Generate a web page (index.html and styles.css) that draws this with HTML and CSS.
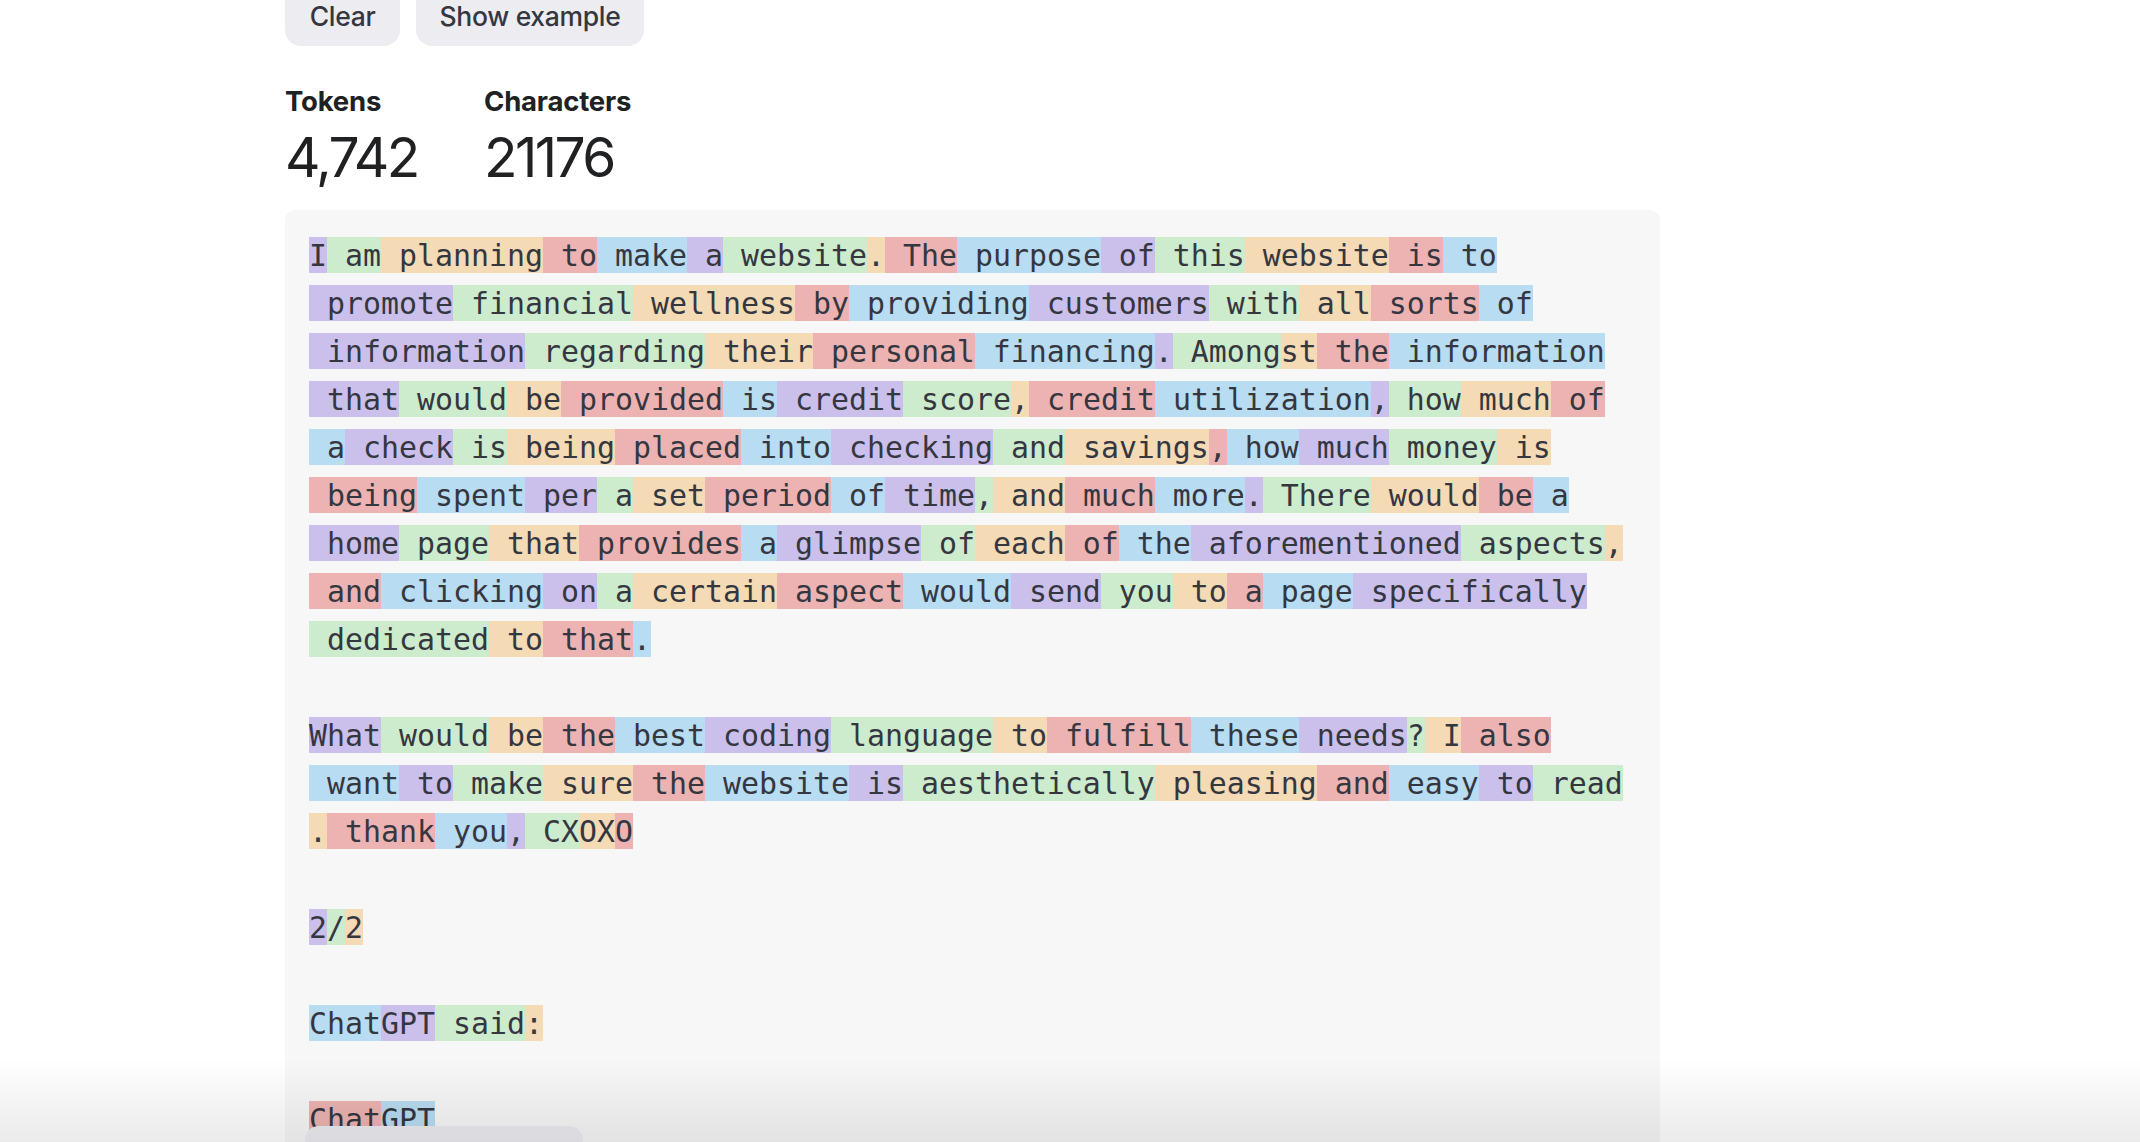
FILE: index.html
```html
<!DOCTYPE html>
<html lang="en">
<head>
<meta charset="utf-8">
<title>Tokenizer</title>
<link rel="stylesheet" href="styles.css">
</head>
<body>
<main class="page">
  <div class="actions">
    <button class="btn btn-clear">Clear</button>
    <button class="btn btn-example">Show example</button>
  </div>
  <div class="stats">
    <div class="stat stat-tokens">
      <div class="stat-label">Tokens</div>
      <div class="stat-value">4,742</div>
    </div>
    <div class="stat">
      <div class="stat-label">Characters</div>
      <div class="stat-value">21176</div>
    </div>
  </div>
  <section class="tokens"><span class="t p">I</span><span class="t g"> am</span><span class="t o"> planning</span><span class="t r"> to</span><span class="t b"> make</span><span class="t p"> a</span><span class="t g"> website</span><span class="t o">.</span><span class="t r"> The</span><span class="t b"> purpose</span><span class="t p"> of</span><span class="t g"> this</span><span class="t o"> website</span><span class="t r"> is</span><span class="t b"> to</span><span class="t p"> promote</span><span class="t g"> financial</span><span class="t o"> wellness</span><span class="t r"> by</span><span class="t b"> providing</span><span class="t p"> customers</span><span class="t g"> with</span><span class="t o"> all</span><span class="t r"> sorts</span><span class="t b"> of</span><span class="t p"> information</span><span class="t g"> regarding</span><span class="t o"> their</span><span class="t r"> personal</span><span class="t b"> financing</span><span class="t p">.</span><span class="t g"> Among</span><span class="t o">st</span><span class="t r"> the</span><span class="t b"> information</span><span class="t p"> that</span><span class="t g"> would</span><span class="t o"> be</span><span class="t r"> provided</span><span class="t b"> is</span><span class="t p"> credit</span><span class="t g"> score</span><span class="t o">,</span><span class="t r"> credit</span><span class="t b"> utilization</span><span class="t p">,</span><span class="t g"> how</span><span class="t o"> much</span><span class="t r"> of</span><span class="t b"> a</span><span class="t p"> check</span><span class="t g"> is</span><span class="t o"> being</span><span class="t r"> placed</span><span class="t b"> into</span><span class="t p"> checking</span><span class="t g"> and</span><span class="t o"> savings</span><span class="t r">,</span><span class="t b"> how</span><span class="t p"> much</span><span class="t g"> money</span><span class="t o"> is</span><span class="t r"> being</span><span class="t b"> spent</span><span class="t p"> per</span><span class="t g"> a</span><span class="t o"> set</span><span class="t r"> period</span><span class="t b"> of</span><span class="t p"> time</span><span class="t g">,</span><span class="t o"> and</span><span class="t r"> much</span><span class="t b"> more</span><span class="t p">.</span><span class="t g"> There</span><span class="t o"> would</span><span class="t r"> be</span><span class="t b"> a</span><span class="t p"> home</span><span class="t g"> page</span><span class="t o"> that</span><span class="t r"> provides</span><span class="t b"> a</span><span class="t p"> glimpse</span><span class="t g"> of</span><span class="t o"> each</span><span class="t r"> of</span><span class="t b"> the</span><span class="t p"> aforementioned</span><span class="t g"> aspects</span><span class="t o">,</span><span class="t r"> and</span><span class="t b"> clicking</span><span class="t p"> on</span><span class="t g"> a</span><span class="t o"> certain</span><span class="t r"> aspect</span><span class="t b"> would</span><span class="t p"> send</span><span class="t g"> you</span><span class="t o"> to</span><span class="t r"> a</span><span class="t b"> page</span><span class="t p"> specifically</span><span class="t g"> dedicated</span><span class="t o"> to</span><span class="t r"> that</span><span class="t b">.</span><br><br><span class="t p">What</span><span class="t g"> would</span><span class="t o"> be</span><span class="t r"> the</span><span class="t b"> best</span><span class="t p"> coding</span><span class="t g"> language</span><span class="t o"> to</span><span class="t r"> fulfill</span><span class="t b"> these</span><span class="t p"> needs</span><span class="t g">?</span><span class="t o"> I</span><span class="t r"> also</span><span class="t b"> want</span><span class="t p"> to</span><span class="t g"> make</span><span class="t o"> sure</span><span class="t r"> the</span><span class="t b"> website</span><span class="t p"> is</span><span class="t g"> aesthetically</span><span class="t o"> pleasing</span><span class="t r"> and</span><span class="t b"> easy</span><span class="t p"> to</span><span class="t g"> read</span><span class="t o">.</span><span class="t r"> thank</span><span class="t b"> you</span><span class="t p">,</span><span class="t g"> CX</span><span class="t o">OX</span><span class="t r">O</span><br><br><span class="t p">2</span><span class="t g">/</span><span class="t o">2</span><br><br><span class="t b">Chat</span><span class="t p">GPT</span><span class="t g"> said</span><span class="t o">:</span><br><br><span class="t r">Chat</span><span class="t b">GPT</span><br><br><span class="t p">Certainly</span><span class="t g">!</span><span class="t o"> Creating</span><span class="t r"> a</span><span class="t b"> website</span></section>
</main>
<div class="view-toggle" aria-hidden="true"></div>
<div class="bottom-fade" aria-hidden="true"></div>
</body>
</html>
```
FILE: styles.css
```css
html, body {
  margin: 0;
  padding: 0;
  background: #ffffff;
  overflow: hidden;
}

body {
  font-family: Inter, "Noto Sans", "Liberation Sans", sans-serif;
  color: #202123;
}

.page {
  width: 1375px;
  margin-left: 285px;
}

.actions {
  display: flex;
  gap: 16px;
  margin-top: -14px;
}

.btn {
  height: 60px;
  padding: 0;
  border: 0;
  border-radius: 16px;
  background: #ececf1;
  color: #353740;
  font-family: Inter, "Noto Sans", sans-serif;
  font-size: 26.5px;
  font-weight: 500;
  line-height: 60px;
  letter-spacing: -0.3px;
}

.btn-clear { width: 115px; }
.btn-example { width: 228px; }

.stats {
  display: flex;
  gap: 68px;
  margin-top: 37px;
}

.stat-tokens { width: 131px; }

.stat-label {
  font-size: 27.5px;
  font-weight: 700;
  line-height: 36px;
  letter-spacing: -0.2px;
  color: #202123;
}

.stat-value {
  margin-top: 6px;
  font-size: 55px;
  font-weight: 400;
  line-height: 64px;
  letter-spacing: -2.6px;
  color: #202123;
}

.tokens {
  margin-top: 21px;
  padding: 21px 24px 200px 24px;
  background: #f7f7f7;
  border-radius: 10px;
  font-family: "DejaVu Sans Mono", "Liberation Mono", monospace;
  font-size: 29.9px;
  line-height: 48px;
  color: #353740;
}

.t {
  display: inline-block;
  vertical-align: top;
  box-sizing: border-box;
  height: 36px;
  margin-top: 6px;
  padding-top: 2px;
  line-height: 34px;
  white-space: pre;
}

.p { background: #cbc0ec; }
.g { background: #cdebcd; }
.o { background: #f4dab5; }
.r { background: #ecb3b2; }
.b { background: #b8dcf2; }

.view-toggle {
  position: fixed;
  left: 305px;
  top: 1126px;
  width: 278px;
  height: 60px;
  border-radius: 14px;
  background: #ececf1;
}

.bottom-fade {
  position: fixed;
  left: 0;
  right: 0;
  bottom: 0;
  height: 84px;
  background: linear-gradient(to bottom, rgba(0, 0, 0, 0), rgba(0, 0, 0, 0.08));
  pointer-events: none;
}
```
